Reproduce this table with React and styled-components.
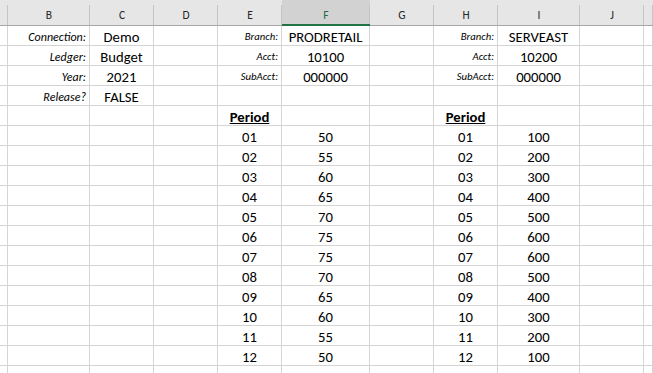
import React from 'react';
import styled, { createGlobalStyle } from 'styled-components';

const COLS = [8, 82, 64, 64, 64, 88, 64, 64, 82, 64];
const TEMPLATE = COLS.map((w) => `${w}px`).join(' ') + ' 1fr';
const LETTERS = ['', 'B', 'C', 'D', 'E', 'F', 'G', 'H', 'I', 'J', ''];
const SELECTED = 5;

const label = (text, size) => ({ text, kind: 'label', size });
const val = (text) => ({ text, kind: 'value' });
const head = (text) => ({ text, kind: 'head' });

const F_VALUES = [50, 55, 60, 65, 70, 75, 75, 70, 65, 60, 55, 50];
const I_VALUES = [100, 200, 300, 400, 500, 600, 600, 500, 400, 300, 200, 100];

const rows = [
  {
    1: label('Connection:', 12), 2: val('Demo'),
    4: label('Branch:', 10.7), 5: val('PRODRETAIL'),
    7: label('Branch:', 10.7), 8: val('SERVEAST'),
  },
  {
    1: label('Ledger:', 12), 2: val('Budget'),
    4: label('Acct:', 10.7), 5: val('10100'),
    7: label('Acct:', 10.7), 8: val('10200'),
  },
  {
    1: label('Year:', 12), 2: val('2021'),
    4: label('SubAcct:', 10.7), 5: val('000000'),
    7: label('SubAcct:', 10.7), 8: val('000000'),
  },
  { 1: label('Release?', 12), 2: val('FALSE') },
  { 4: head('Period'), 7: head('Period') },
  ...F_VALUES.map((f, i) => {
    const p = String(i + 1).padStart(2, '0');
    return { 4: val(p), 5: val(String(f)), 7: val(p), 8: val(String(I_VALUES[i])) };
  }),
  {},
];

const App = () => {
  return (
    <>
      <GlobalStyle />
      <Sheet>
        <Row>
          {LETTERS.map((l, i) => (
            <ColHeader key={i} $selected={i === SELECTED}>
              {l}
            </ColHeader>
          ))}
        </Row>
        {rows.map((row, r) => (
          <Row key={r}>
            {LETTERS.map((_, c) => {
              const cell = row[c];
              if (!cell) return <Cell key={c} />;
              if (cell.kind === 'label') {
                return (
                  <Cell key={c} $align="flex-end">
                    <Label $size={cell.size}>{cell.text}</Label>
                  </Cell>
                );
              }
              if (cell.kind === 'head') {
                return (
                  <Cell key={c}>
                    <Heading>{cell.text}</Heading>
                  </Cell>
                );
              }
              return (
                <Cell key={c}>
                  <Value>{cell.text}</Value>
                </Cell>
              );
            })}
          </Row>
        ))}
      </Sheet>
    </>
  );
};

const GlobalStyle = createGlobalStyle`
  html, body {
    margin: 0;
    padding: 0;
    background: #fff;
    overflow: hidden;
  }
  body {
    font-family: Calibri, Carlito, "Liberation Sans", Arial, sans-serif;
    color: #000;
  }
`;

const Sheet = styled.div`
  width: 653px;
  height: 373px;
  overflow: hidden;
  display: flex;
  flex-direction: column;
`;

const Row = styled.div`
  display: grid;
  grid-template-columns: ${TEMPLATE};
  flex-shrink: 0;
`;

const ColHeader = styled.div`
  position: relative;
  box-sizing: border-box;
  height: 26px;
  padding-top: 5px;
  display: flex;
  align-items: center;
  justify-content: center;
  font-size: 11.5px;
  color: ${(p) => (p.$selected ? '#1e6b41' : '#262626')};
  background: ${(p) => (p.$selected ? '#d2d2d2' : '#e6e6e6')};
  border-bottom: ${(p) => (p.$selected ? '2px solid #217346' : '1px solid #a6a6a6')};

  &::after {
    content: '';
    position: absolute;
    right: 0;
    top: 5px;
    bottom: 0;
    width: 1px;
    background: #c4c4c4;
  }
`;

const Cell = styled.div`
  box-sizing: border-box;
  height: 20px;
  padding: 0 3px;
  display: flex;
  align-items: flex-end;
  justify-content: ${(p) => p.$align || 'center'};
  border-right: 1px solid #d4d4d4;
  border-bottom: 1px solid #d4d4d4;
  white-space: nowrap;
  min-width: 0;
`;

const Value = styled.span`
  font-size: 14.7px;
  line-height: 16px;
`;

const Heading = styled(Value)`
  font-weight: bold;
  text-decoration: underline;
`;

const Label = styled.span`
  font-size: ${(p) => p.$size}px;
  font-style: italic;
  line-height: 14px;
  padding-bottom: 1px;
`;

export default App;
